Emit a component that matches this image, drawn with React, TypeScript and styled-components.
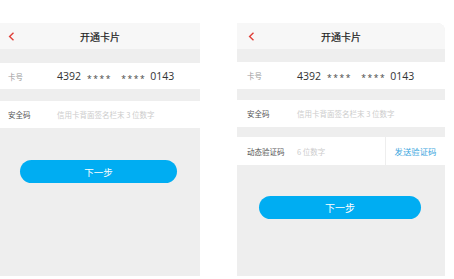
import React from 'react';
import styled, { createGlobalStyle } from 'styled-components';

const GlobalStyle = createGlobalStyle`
  html, body {
    margin: 0;
    padding: 0;
    background: #ffffff;
  }
  body {
    font-family: 'Noto Sans CJK SC', 'Noto Sans', sans-serif;
  }
`;

const Page = styled.div`
  width: 454px;
  height: 279px;
  display: flex;
  flex-direction: row;
  align-items: flex-start;
  padding-top: 23px;
  box-sizing: border-box;
  overflow: hidden;
`;

const Screen = styled.div<{ $width: number; $left: number; $round?: boolean }>`
  width: ${(p) => p.$width}px;
  height: 253px;
  margin-left: ${(p) => p.$left}px;
  background: #eeeeee;
  display: flex;
  flex-direction: column;
  border-top-right-radius: ${(p) => (p.$round ? '8px' : '0')};
  overflow: hidden;
`;

const Header = styled.div`
  height: 26px;
  background: #f7f7f7;
  display: flex;
  align-items: center;
  justify-content: center;
  position: relative;
`;

const Back = styled.svg<{ $left: number }>`
  position: absolute;
  left: ${(p) => p.$left}px;
  top: 9px;
`;

const Title = styled.span`
  font-size: 10px;
  font-weight: 400;
  color: #222222;
  -webkit-text-stroke: 0.2px #222222;
`;

const Gap = styled.div<{ $h: number }>`
  height: ${(p) => p.$h}px;
`;

const Row = styled.div<{ $h: number; $pad: number }>`
  height: ${(p) => p.$h}px;
  background: #ffffff;
  display: flex;
  align-items: center;
  padding-left: ${(p) => p.$pad}px;
`;

const Label = styled.span<{ $w: number; $dark?: boolean }>`
  width: ${(p) => p.$w}px;
  flex-shrink: 0;
  font-size: 7.5px;
  color: ${(p) => (p.$dark ? '#555555' : '#999999')};
`;

const CardNo = styled.div`
  display: flex;
  align-items: center;
  font-family: 'Open Sans', 'Noto Sans', sans-serif;
  font-size: 10.5px;
  color: #333333;
`;

const Stars = styled.span<{ $ml: number }>`
  display: inline-block;
  margin-left: ${(p) => p.$ml}px;
  font-size: 8.5px;
  letter-spacing: 1.6px;
  color: #444444;
  transform: translateY(1.5px);
`;

const Digits = styled.span<{ $ml?: number }>`
  margin-left: ${(p) => p.$ml || 0}px;
`;

const Placeholder = styled.span`
  font-size: 7.5px;
  color: #cccccc;
  flex: 1;
`;

const SendBox = styled.div`
  align-self: stretch;
  border-left: 1px solid #eeeeee;
  width: 59px;
  display: flex;
  align-items: center;
  justify-content: center;
  font-size: 8.4px;
  color: #3aa6de;
`;

const Button = styled.div<{ $mt: number; $ml: number; $w: number; $fs: number }>`
  margin-top: ${(p) => p.$mt}px;
  margin-left: ${(p) => p.$ml}px;
  width: ${(p) => p.$w}px;
  height: 23px;
  border-radius: 12px;
  background: #00adf2;
  color: #ffffff;
  font-size: ${(p) => p.$fs}px;
  display: flex;
  align-items: center;
  justify-content: center;
`;

const Chevron = ({ left }: { left: number }) => (
  <Back $left={left} width="7" height="9" viewBox="0 0 7 9">
    <path d="M5.5 0.8 L1.6 4.5 L5.5 8.2" fill="none" stroke="#e0413a" strokeWidth="1.4" />
  </Back>
);

const CardNumber = () => (
  <CardNo>
    <Digits>4392</Digits>
    <Stars $ml={6}>****</Stars>
    <Stars $ml={9}>****</Stars>
    <Digits $ml={4}>0143</Digits>
  </CardNo>
);

const App = () => {
  return (
    <>
      <GlobalStyle />
      <Page>
        <Screen $width={200} $left={0}>
          <Header>
            <Chevron left={8} />
            <Title>开通卡片</Title>
          </Header>
          <Gap $h={14} />
          <Row $h={26} $pad={8}>
            <Label $w={49}>卡号</Label>
            <CardNumber />
          </Row>
          <Gap $h={12} />
          <Row $h={27} $pad={8}>
            <Label $w={49} $dark>安全码</Label>
            <Placeholder>信用卡背面签名栏末 3 位数字</Placeholder>
          </Row>
          <Button $mt={32} $ml={20} $w={157} $fs={9.5}>下一步</Button>
        </Screen>
        <Screen $width={208} $left={37} $round>
          <Header>
            <Chevron left={11} />
            <Title>开通卡片</Title>
          </Header>
          <Gap $h={13} />
          <Row $h={27} $pad={10}>
            <Label $w={50}>卡号</Label>
            <CardNumber />
          </Row>
          <Gap $h={11} />
          <Row $h={27} $pad={10}>
            <Label $w={50} $dark>安全码</Label>
            <Placeholder>信用卡背面签名栏末 3 位数字</Placeholder>
          </Row>
          <Gap $h={10} />
          <Row $h={28} $pad={10}>
            <Label $w={50} $dark>动态验证码</Label>
            <Placeholder>6 位数字</Placeholder>
            <SendBox>发送验证码</SendBox>
          </Row>
          <Button $mt={31} $ml={22} $w={162} $fs={10}>下一步</Button>
        </Screen>
      </Page>
    </>
  );
};

export default App;
